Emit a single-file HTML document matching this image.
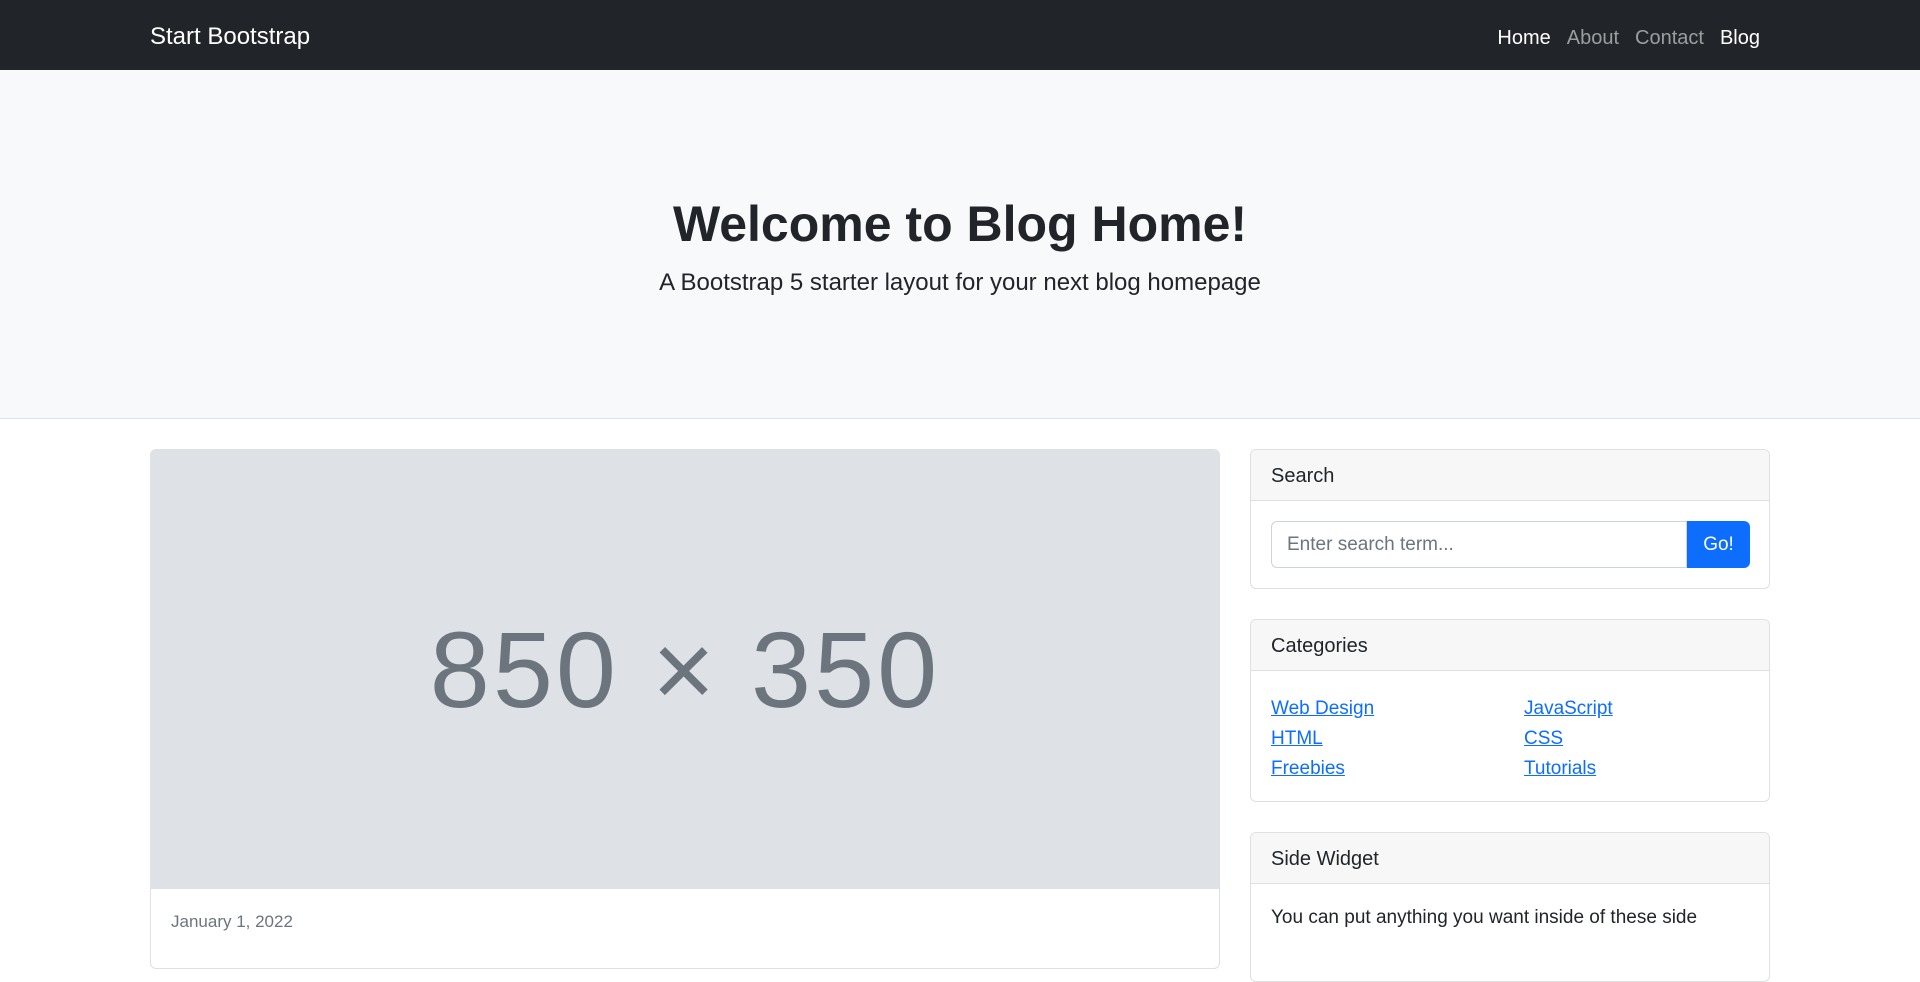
<!DOCTYPE html>
<html><head><meta charset="utf-8"><style>
*{box-sizing:border-box;margin:0;padding:0}
body{width:1920px;height:925px;overflow:hidden;font-family:"Liberation Sans",sans-serif;color:#212529;background:#fff;position:relative;font-size:20px}
.nav{position:absolute;left:0;top:0;width:1920px;height:70px;background:#212529}
.brand{position:absolute;left:150px;top:23px;color:#fff;font-size:24px}
.links{position:absolute;right:160px;top:27px;font-size:20px}
.links span{margin-left:16px;color:rgba(255,255,255,.55)}
.links .a{color:#fff}
.hero{position:absolute;top:70px;left:0;width:1920px;height:349px;background:#f8f9fa;border-bottom:1px solid #dee2e6;text-align:center}
.hero h1{position:absolute;top:125px;width:100%;font-size:50px;font-weight:bold}
.hero p{position:absolute;top:199px;width:100%;font-size:24px;font-weight:300}
.card{position:absolute;border:1px solid #dfe0e1;border-radius:6px;background:#fff;overflow:hidden}
.ch{height:51px;background:#f7f7f7;border-bottom:1px solid #dfe0e1;padding:15px 20px;font-size:20px}
.img{position:absolute;left:0;top:0;width:100%;height:439px;background:#dee2e6;text-align:center;line-height:439px;font-size:108px;color:#6c757d;letter-spacing:3px}
a{color:#0d6efd;text-decoration:underline}
</style></head><body>
<div class="nav"><div class="brand">Start Bootstrap</div>
<div class="links"><span class="a">Home</span><span>About</span><span>Contact</span><span class="a">Blog</span></div></div>
<div class="hero"><h1>Welcome to Blog Home!</h1><p>A Bootstrap 5 starter layout for your next blog homepage</p></div>
<div class="card" style="left:150px;top:449px;width:1070px;height:520px">
<div class="img">850 × 350</div>
<div style="position:absolute;top:462px;left:20px;color:#6c757d;font-size:17px">January 1, 2022</div></div>
<div class="card" style="left:1250px;top:449px;width:520px;height:140px">
<div class="ch">Search</div>
<div style="position:absolute;left:20px;top:71px;width:416px;height:47px;border:1px solid #ced4da;border-radius:6px 0 0 6px;padding:12px 15px;color:#6c757d;font-size:19px">Enter search term...</div>
<div style="position:absolute;left:436px;top:71px;width:63px;height:47px;background:#0d6efd;border-radius:0 6px 6px 0;color:#fff;text-align:center;line-height:47px;font-size:19px">Go!</div></div>
<div class="card" style="left:1250px;top:619px;width:520px;height:183px">
<div class="ch">Categories</div>
<div style="position:absolute;left:20px;top:74px;line-height:30px;font-size:19px"><a>Web Design</a><br><a>HTML</a><br><a>Freebies</a></div>
<div style="position:absolute;left:273px;top:74px;line-height:30px;font-size:19px"><a>JavaScript</a><br><a>CSS</a><br><a>Tutorials</a></div></div>
<div class="card" style="left:1250px;top:832px;width:520px;height:150px">
<div class="ch">Side Widget</div>
<div style="position:absolute;left:20px;top:74px;font-size:19px">You can put anything you want inside of these side</div></div>
</body></html>
